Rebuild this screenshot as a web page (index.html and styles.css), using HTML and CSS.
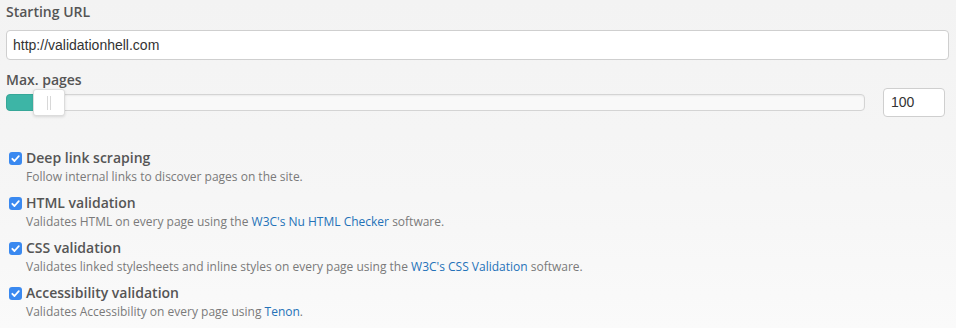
FILE: index.html
```html
<!DOCTYPE html>
<html>
<head>
<meta charset="utf-8">
<link rel="stylesheet" href="styles.css">
</head>
<body>
<div class="form">
  <label class="label">Starting URL</label>
  <div class="text-input">http://validationhell.com</div>

  <label class="label label-pages">Max. pages</label>
  <div class="slider-row">
    <div class="track">
      <div class="fill"></div>
      <div class="handle"><span class="grip"></span><span class="grip"></span></div>
    </div>
    <div class="num-input">100</div>
  </div>

  <ul class="options">
    <li class="option">
      <div class="title"><span class="cb"><svg viewBox="0 0 13 13" width="13" height="13"><path d="M3.3 6.8 L5.5 9 L9.8 4.2" fill="none" stroke="#fff" stroke-width="1.8" stroke-linecap="round" stroke-linejoin="round"/></svg></span>Deep link scraping</div>
      <div class="desc">Follow internal links to discover pages on the site.</div>
    </li>
    <li class="option">
      <div class="title"><span class="cb"><svg viewBox="0 0 13 13" width="13" height="13"><path d="M3.3 6.8 L5.5 9 L9.8 4.2" fill="none" stroke="#fff" stroke-width="1.8" stroke-linecap="round" stroke-linejoin="round"/></svg></span>HTML validation</div>
      <div class="desc">Validates HTML on every page using the <a class="link">W3C's Nu HTML Checker</a> software.</div>
    </li>
    <li class="option">
      <div class="title"><span class="cb"><svg viewBox="0 0 13 13" width="13" height="13"><path d="M3.3 6.8 L5.5 9 L9.8 4.2" fill="none" stroke="#fff" stroke-width="1.8" stroke-linecap="round" stroke-linejoin="round"/></svg></span>CSS validation</div>
      <div class="desc">Validates linked stylesheets and inline styles on every page using the <a class="link">W3C's CSS Validation</a> software.</div>
    </li>
    <li class="option">
      <div class="title"><span class="cb"><svg viewBox="0 0 13 13" width="13" height="13"><path d="M3.3 6.8 L5.5 9 L9.8 4.2" fill="none" stroke="#fff" stroke-width="1.8" stroke-linecap="round" stroke-linejoin="round"/></svg></span>Accessibility validation</div>
      <div class="desc">Validates Accessibility on every page using <a class="link">Tenon</a>.</div>
    </li>
  </ul>
</div>
</body>
</html>
```

FILE: styles.css
```css
html, body {
  margin: 0;
  padding: 0;
}
body {
  width: 956px;
  height: 328px;
  overflow: hidden;
  background: linear-gradient(to bottom, #f3f3f3 0%, #f6f6f6 60%, #fafafa 100%);
  font-family: "Open Sans", "Liberation Sans", sans-serif;
}
.form {
  padding: 2px 7px 0 6px;
  display: flex;
  flex-direction: column;
}
.label {
  display: block;
  font-size: 14px;
  font-weight: 600;
  line-height: 20px;
  color: #555;
  margin-bottom: 8px;
}
.label-pages {
  margin-top: 10px;
  margin-bottom: 0;
}
.text-input {
  box-sizing: border-box;
  height: 30px;
  border: 1px solid #cfcfcf;
  border-radius: 4px;
  background: #fff;
  padding: 0 6px;
  font-family: "Liberation Sans", Arial, sans-serif;
  font-size: 14px;
  line-height: 28px;
  color: #333;
}
.slider-row {
  display: flex;
  align-items: center;
  gap: 18px;
  padding-right: 4px;
  height: 29px;
  margin-top: -2px;
}
.track {
  position: relative;
  flex: 1;
  box-sizing: border-box;
  height: 17px;
  border: 1px solid #d4d4d4;
  border-radius: 4px;
  background: #f9f9f9;
  box-shadow: inset 0 1px 2px rgba(0,0,0,0.06);
}
.fill {
  position: absolute;
  left: -1px;
  top: -1px;
  bottom: -1px;
  width: 34px;
  background: #3db5a6;
  border: 1px solid #36a798;
  box-sizing: border-box;
  border-radius: 4px 0 0 4px;
}
.handle {
  position: absolute;
  left: 26px;
  top: -6px;
  width: 32px;
  height: 27px;
  box-sizing: border-box;
  background: #fff;
  border: 1px solid #dcdcdc;
  border-radius: 3px;
  box-shadow: 0 1px 3px rgba(0,0,0,0.12);
  display: flex;
  justify-content: center;
  align-items: center;
  gap: 2px;
}
.grip {
  width: 1px;
  height: 14px;
  background: #d8d8d8;
}
.num-input {
  box-sizing: border-box;
  width: 62px;
  height: 29px;
  border: 1px solid #cfcfcf;
  border-radius: 4px;
  background: #fff;
  padding: 0 7px;
  font-family: "Liberation Sans", Arial, sans-serif;
  font-size: 14px;
  line-height: 27px;
  color: #333;
}
.options {
  list-style: none;
  margin: 31px 0 0 0;
  padding: 0;
  display: flex;
  flex-direction: column;
  gap: 7px;
}
.title {
  display: flex;
  align-items: center;
  font-size: 14px;
  font-weight: 600;
  line-height: 20px;
  color: #555;
}
.cb {
  display: inline-flex;
  width: 13px;
  height: 13px;
  margin: 0 4px 0 3px;
  background: #3a89f0;
  border-radius: 3px;
}
.desc {
  padding-left: 20px;
  font-size: 12px;
  line-height: 18px;
  color: #7a7a7a;
}
.link {
  color: #2472b8;
  text-decoration: none;
}
```
